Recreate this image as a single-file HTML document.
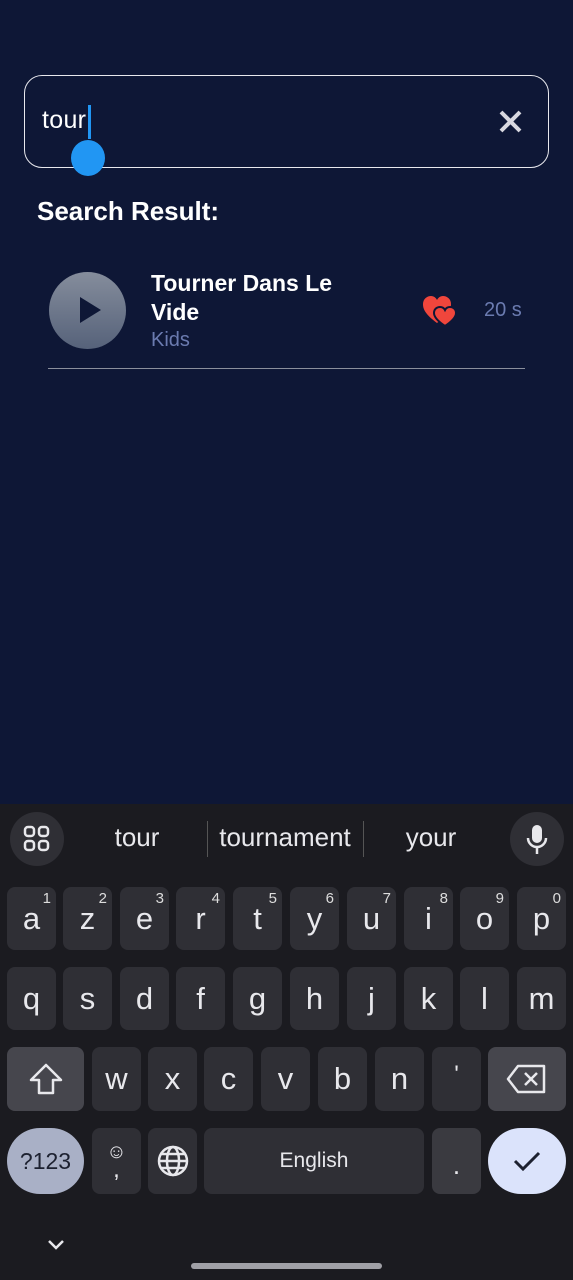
<!DOCTYPE html>
<html><head><style>
*{margin:0;padding:0;box-sizing:border-box}
body{width:573px;height:1280px;background:#0e1736;position:relative;overflow:hidden;font-family:"Liberation Sans",Roboto,sans-serif;color:#fff}
.a{position:absolute}
.k{position:absolute;background:#2f2f35;border-radius:8px;color:#e8e8ec;font-size:31px;display:flex;align-items:center;justify-content:center;width:49px;height:63px}
.k sup{position:absolute;top:3px;right:5px;font-size:15px;color:#ddd}
.dk{background:#46464d}
.sg{position:absolute;top:822px;font-size:26px;color:#e8e8ec;text-align:center}
</style></head><body>
<div class="a" style="left:24px;top:75px;width:525px;height:93px;border:1.5px solid #e8e8ee;border-radius:18px"></div>
<div class="a" style="left:42px;top:106px;font-size:25px;letter-spacing:0.3px">tour</div>
<div class="a" style="left:88px;top:105px;width:3px;height:34px;background:#2196f3"></div>
<div class="a" style="left:71px;top:140px;width:34px;height:36px;background:#2196f3;border-radius:50%"></div>
<svg class="a" style="left:498px;top:109px" width="25" height="25" viewBox="0 0 25 25"><path d="M3 3L22 22M22 3L3 22" stroke="#d8d8e0" stroke-width="4"/></svg>
<div class="a" style="left:37px;top:196px;font-size:26px;font-weight:bold">Search Result:</div>
<div class="a" style="left:49px;top:272px;width:77px;height:77px;border-radius:50%;background:linear-gradient(#858d9c,#56627a)"></div>
<svg class="a" style="left:78px;top:296px" width="24" height="28"><path d="M2 1L23 14L2 27Z" fill="#0e1736"/></svg>
<div class="a" style="left:151px;top:269px;font-size:23px;font-weight:bold;line-height:29px">Tourner Dans Le<br>Vide</div>
<div class="a" style="left:151px;top:329px;font-size:20px;color:#6b7bb0">Kids</div>
<svg class="a" style="left:421px;top:295px" width="36" height="32" viewBox="0 0 36 32"><path d="M16 28C4 19 2 14 2 9C2 4 6 1 10 1C13 1 15 3 16 5C17 3 19 1 22 1C26 1 30 4 30 9C30 14 28 19 16 28Z" fill="#f0463c"/><path d="M24 31C15 25 13 21 13 18C13 14 16 12 19 12C21 12 23 13 24 15C25 13 27 12 29 12C32 12 35 14 35 18C35 21 33 25 24 31Z" fill="#f0463c" stroke="#0e1736" stroke-width="2"/></svg>
<div class="a" style="left:484px;top:299px;font-size:20px;color:#6b7bb0">20 s</div>
<div class="a" style="left:48px;top:368px;width:477px;height:1px;background:#8a8f9c"></div>

<div class="a" style="left:0;top:804px;width:573px;height:476px;background:#1b1b20"></div>
<div class="a" style="left:10px;top:812px;width:54px;height:54px;border-radius:50%;background:#2f2f35"></div>
<svg class="a" style="left:23px;top:825px" width="28" height="28"><g fill="none" stroke="#e8e8ec" stroke-width="2.5"><rect x="2" y="2" width="9" height="9" rx="3"/><rect x="16" y="2" width="9" height="9" rx="3"/><rect x="2" y="16" width="9" height="9" rx="3"/><rect x="16" y="16" width="9" height="9" rx="3"/></g></svg>
<div class="sg" style="left:87px;width:100px">tour</div>
<div class="a" style="left:207px;top:821px;width:1px;height:36px;background:#555"></div>
<div class="sg" style="left:210px;width:150px">tournament</div>
<div class="a" style="left:363px;top:821px;width:1px;height:36px;background:#555"></div>
<div class="sg" style="left:381px;width:100px">your</div>
<div class="a" style="left:510px;top:812px;width:54px;height:54px;border-radius:50%;background:#2f2f35"></div>
<svg class="a" style="left:524px;top:824px" width="26" height="32"><rect x="8" y="1" width="10" height="18" rx="5" fill="#e8e8ec"/><path d="M4 14a9 9 0 0 0 18 0M13 23v7" stroke="#e8e8ec" stroke-width="2.5" fill="none"/></svg>

<div class="k" style="left:7px;top:887px">a<sup>1</sup></div>
<div class="k" style="left:63px;top:887px">z<sup>2</sup></div>
<div class="k" style="left:120px;top:887px">e<sup>3</sup></div>
<div class="k" style="left:176px;top:887px">r<sup>4</sup></div>
<div class="k" style="left:233px;top:887px">t<sup>5</sup></div>
<div class="k" style="left:290px;top:887px">y<sup>6</sup></div>
<div class="k" style="left:347px;top:887px">u<sup>7</sup></div>
<div class="k" style="left:404px;top:887px">i<sup>8</sup></div>
<div class="k" style="left:460px;top:887px">o<sup>9</sup></div>
<div class="k" style="left:517px;top:887px">p<sup>0</sup></div>

<div class="k" style="left:7px;top:967px">q</div>
<div class="k" style="left:63px;top:967px">s</div>
<div class="k" style="left:120px;top:967px">d</div>
<div class="k" style="left:176px;top:967px">f</div>
<div class="k" style="left:233px;top:967px">g</div>
<div class="k" style="left:290px;top:967px">h</div>
<div class="k" style="left:347px;top:967px">j</div>
<div class="k" style="left:404px;top:967px">k</div>
<div class="k" style="left:460px;top:967px">l</div>
<div class="k" style="left:517px;top:967px">m</div>

<div class="k dk" style="left:7px;top:1047px;width:77px;height:64px"><svg width="36" height="34"><path d="M18 3L33 18H25V31H11V18H3Z" fill="none" stroke="#e8e8ec" stroke-width="2.5" stroke-linejoin="round"/></svg></div>
<div class="k" style="left:92px;top:1047px;height:64px">w</div>
<div class="k" style="left:148px;top:1047px;height:64px">x</div>
<div class="k" style="left:204px;top:1047px;height:64px">c</div>
<div class="k" style="left:261px;top:1047px;height:64px">v</div>
<div class="k" style="left:318px;top:1047px;height:64px">b</div>
<div class="k" style="left:375px;top:1047px;height:64px">n</div>
<div class="k" style="left:432px;top:1047px;height:64px;align-items:flex-start;padding-top:14px;font-size:24px">'</div>
<div class="k dk" style="left:488px;top:1047px;width:78px;height:64px"><svg width="42" height="32"><path d="M12 3H38V29H12L2 16Z" fill="none" stroke="#e8e8ec" stroke-width="2.5" stroke-linejoin="round"/><path d="M19 10L31 22M31 10L19 22" stroke="#e8e8ec" stroke-width="2.5"/></svg></div>

<div class="k" style="left:7px;top:1128px;width:77px;height:66px;border-radius:33px;background:#a9b0c6;color:#1d2130;font-size:23px">?123</div>
<div class="k" style="left:92px;top:1128px;height:66px;flex-direction:column;font-size:24px;line-height:18px"><span style="font-size:20px">☺</span><span>,</span></div>
<div class="k" style="left:148px;top:1128px;height:66px"><svg width="34" height="34" viewBox="0 0 34 34"><g fill="none" stroke="#e8e8ec" stroke-width="2.5"><circle cx="17" cy="17" r="14"/><ellipse cx="17" cy="17" rx="6" ry="14"/><path d="M3 17H31M5 10H29M5 24H29"/></g></svg></div>
<div class="k" style="left:204px;top:1128px;width:220px;height:66px;font-size:21px">English</div>
<div class="k dk" style="left:432px;top:1128px;height:66px;background:#3a3a40;font-size:26px;padding-top:8px">.</div>
<div class="k" style="left:488px;top:1128px;width:78px;height:66px;border-radius:33px;background:#dbe3fb"><svg width="30" height="24"><path d="M3 12L11 20L27 4" fill="none" stroke="#1d2130" stroke-width="3"/></svg></div>

<svg class="a" style="left:46px;top:1238px" width="20" height="14"><path d="M3 3L10 10L17 3" fill="none" stroke="#e8e8ec" stroke-width="2.5"/></svg>
<div class="a" style="left:191px;top:1263px;width:191px;height:6px;border-radius:3px;background:#a0a0a6"></div>
</body></html>
